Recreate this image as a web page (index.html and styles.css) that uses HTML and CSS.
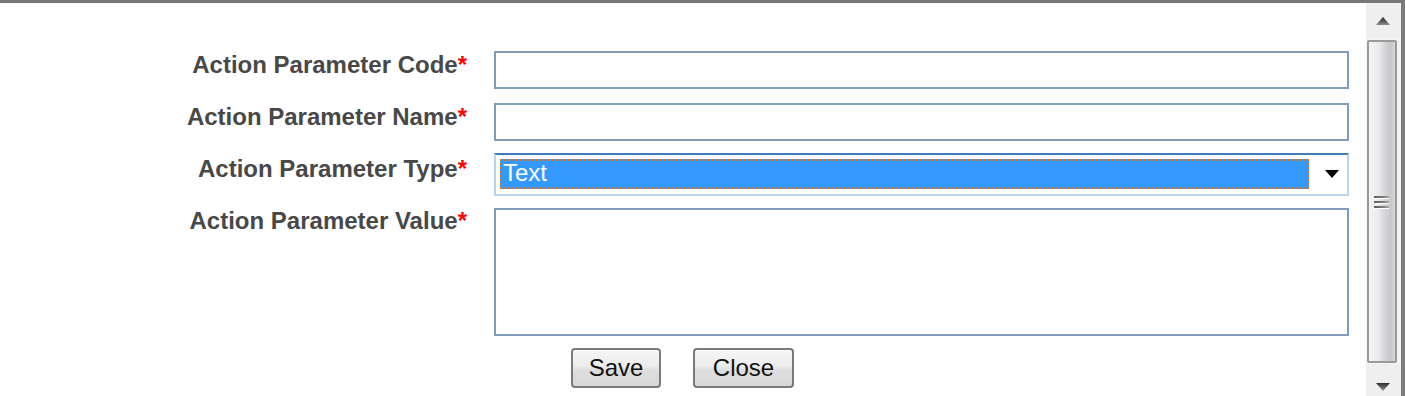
FILE: index.html
```html
<!DOCTYPE html>
<html lang="en">
<head>
<meta charset="utf-8">
<title>Action Parameter</title>
<link rel="stylesheet" href="styles.css">
</head>
<body>
<div class="window">
  <div class="content">
    <form class="form">
      <label class="label">Action Parameter Code<span class="req">*</span></label>
      <input class="field first" type="text">

      <label class="label">Action Parameter Name<span class="req">*</span></label>
      <input class="field" type="text">

      <label class="label label-select">Action Parameter Type<span class="req">*</span></label>
      <div class="select">
        <div class="select-value">Text</div>
        <svg class="select-arrow" width="14" height="8" viewBox="0 0 14 8"><polygon points="0,0 14,0 7,8" fill="#000"/></svg>
      </div>

      <label class="label label-area">Action Parameter Value<span class="req">*</span></label>
      <textarea class="area"></textarea>

      <div class="spacer"></div>
      <div class="actions">
        <button type="button" class="btn btn-save">Save</button>
        <button type="button" class="btn btn-close">Close</button>
      </div>
    </form>
  </div>
  <div class="scrollbar">
    <div class="sb-btn sb-up">
      <svg width="14" height="8" viewBox="0 0 14 8">
        <defs><linearGradient id="gu" x1="0" y1="0" x2="0" y2="1"><stop offset="0" stop-color="#222"/><stop offset="1" stop-color="#8a8a8a"/></linearGradient></defs>
        <polygon points="7,0 14,8 0,8" fill="url(#gu)"/>
      </svg>
    </div>
    <div class="sb-thumb">
      <div class="grip"><span></span><span></span><span></span></div>
    </div>
    <div class="sb-btn sb-down">
      <svg width="14" height="8" viewBox="0 0 14 8">
        <defs><linearGradient id="gd" x1="0" y1="0" x2="0" y2="1"><stop offset="0" stop-color="#2a2a2a"/><stop offset="1" stop-color="#9a9a9a"/></linearGradient></defs>
        <polygon points="0,0 14,0 7,8" fill="url(#gd)"/>
      </svg>
    </div>
  </div>
</div>
</body>
</html>
```
FILE: styles.css
```css
html, body {
  margin: 0;
  padding: 0;
  background: #ffffff;
}

body {
  font-family: "Liberation Sans", Arial, sans-serif;
}

.window {
  display: flex;
  width: 1405px;
  height: 396px;
  box-sizing: border-box;
  border-top: 3px solid #787878;
  border-right: 4px solid #7c7c7c;
  overflow: hidden;
}

.content {
  flex: 1;
  padding-top: 48px;
}

.form {
  display: grid;
  grid-template-columns: 467px 855px;
  column-gap: 27px;
  row-gap: 12px;
  align-items: start;
  margin: 0;
}

.label {
  display: block;
  text-align: right;
  font-size: 24px;
  font-weight: bold;
  line-height: 27px;
  color: #484848;
  white-space: nowrap;
}

.label-select {
  padding-top: 2px;
}

.label-area {
  margin-top: -1px;
}

.req {
  color: #ff0000;
}

.field {
  display: block;
  box-sizing: border-box;
  width: 855px;
  height: 38px;
  margin: 0;
  padding: 0 4px;
  border: 2px solid #7f9db9;
  background: #ffffff;
  font-family: "Liberation Sans", Arial, sans-serif;
  font-size: 24px;
  outline: none;
}

.field.first {
  margin-bottom: 2px;
}

.select {
  display: flex;
  align-items: center;
  box-sizing: border-box;
  width: 855px;
  height: 43px;
  padding: 4px 8px 5px 4px;
  border: 2px solid #b9d5ec;
  border-top-color: #3f7db4;
  background: #ffffff;
}

.select-value {
  box-sizing: border-box;
  width: 809px;
  height: 30px;
  padding-left: 1px;
  border: 2px dotted #df7416;
  background: #3399ff;
  color: #ffffff;
  font-size: 24px;
  line-height: 24px;
}

.select-arrow {
  display: block;
  margin-left: auto;
}

.area {
  display: block;
  box-sizing: border-box;
  width: 855px;
  height: 128px;
  margin: 0;
  padding: 2px 4px;
  border: 2px solid #7f9db9;
  background: #ffffff;
  resize: none;
  font-family: "Liberation Sans", Arial, sans-serif;
  font-size: 24px;
  outline: none;
}

.actions {
  display: flex;
  gap: 32px;
  padding-left: 77px;
}

.btn {
  box-sizing: border-box;
  height: 40px;
  margin: 0;
  padding: 0;
  border: 2px solid #7b7b7b;
  border-radius: 4px;
  background: linear-gradient(to bottom, #f6f6f6 0%, #ececec 45%, #dedede 55%, #d8d8d8 100%);
  box-shadow: inset 0 1px 0 #ffffff;
  font-family: "Liberation Sans", Arial, sans-serif;
  font-size: 24px;
  line-height: 36px;
  color: #111111;
}

.btn-save {
  width: 90px;
}

.btn-close {
  width: 101px;
}

.scrollbar {
  display: flex;
  flex-direction: column;
  width: 35px;
  background: #f3f3f3;
}

.sb-btn {
  display: flex;
  justify-content: center;
  background: #efefef;
}

.sb-btn svg {
  display: block;
  margin-left: -1px;
}

.sb-up {
  height: 35px;
  padding-top: 14px;
  box-sizing: border-box;
}

.sb-thumb {
  display: flex;
  align-items: center;
  justify-content: center;
  box-sizing: border-box;
  width: 30px;
  height: 323px;
  margin: 2px 0 1px 1px;
  border: 2px solid #9a9a9a;
  border-radius: 2px;
  background: linear-gradient(to right, #f4f4f4 0%, #ececec 35%, #d2d2d6 65%, #c8c8cc 85%, #d6d6d9 100%);
}

.grip {
  display: flex;
  flex-direction: column;
  gap: 3px;
  width: 15px;
  margin-left: -1px;
}

.grip span {
  display: block;
  height: 2px;
  background: linear-gradient(to right, #5e5e5e, #7a7a7a 60%, #a8a8a8);
  box-shadow: 0 1px 0 #ffffff;
}

.sb-down {
  flex: 1;
  padding-top: 19px;
  box-sizing: border-box;
}
```
